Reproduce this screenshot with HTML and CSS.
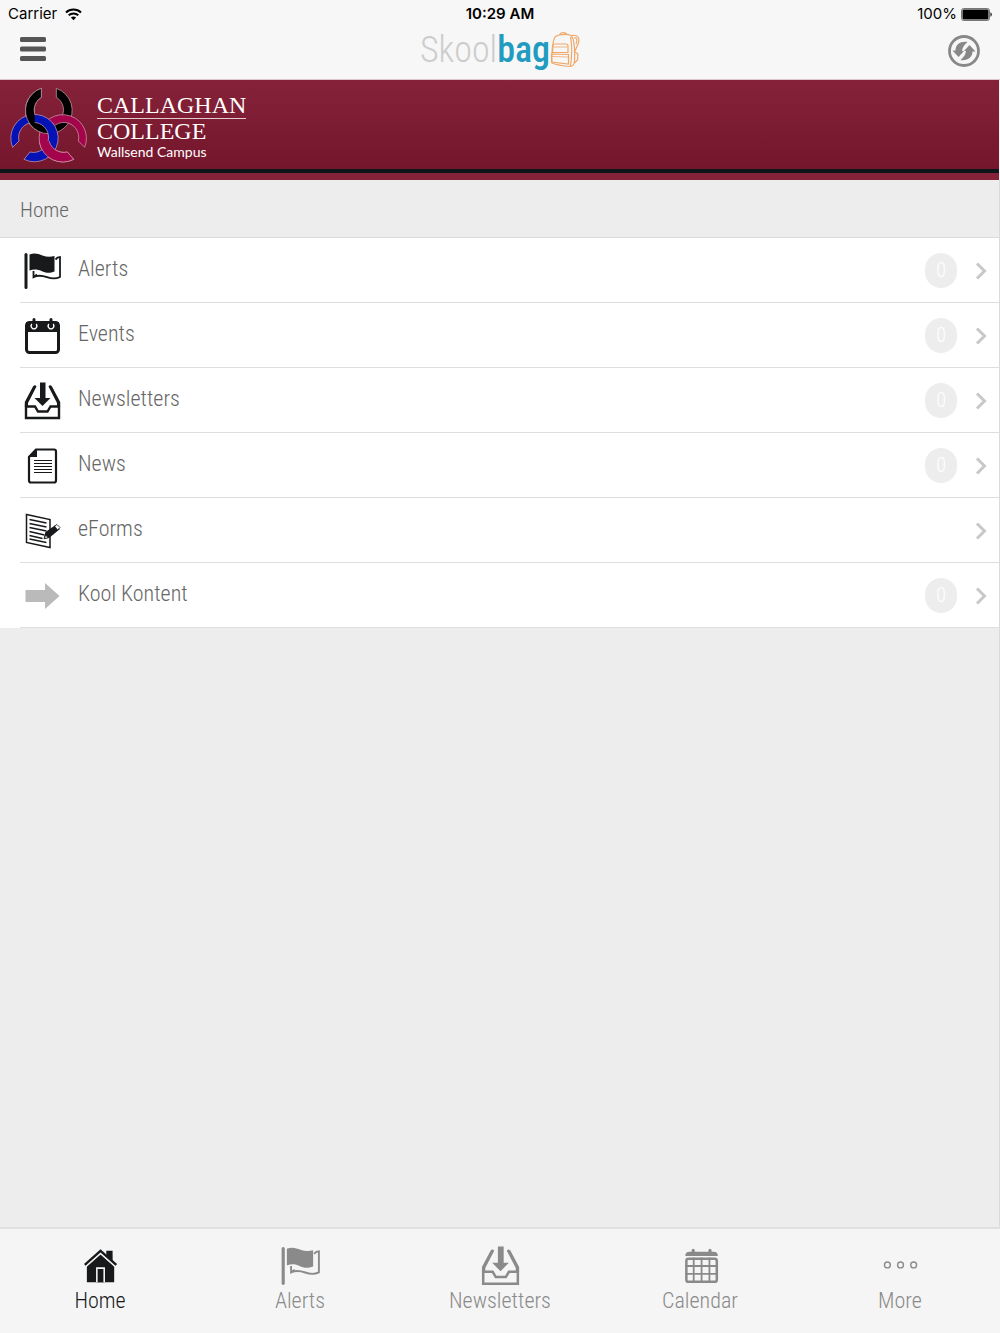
FILE: index.html
```html
<!DOCTYPE html>
<html lang="en">
	<head>
		<meta charset="UTF-8">
		<meta name="viewport" content="width=device-width, initial-scale=1">
		<title>Skoolbag</title>
		<link rel="stylesheet" href="styles.css">
	</head>
	<body>
		<!-- shared icons -->
		<svg class="defs" aria-hidden="true">
			<symbol id="flag" viewBox="0 0 40 40">
				<path d="M4 3.500v33" fill="none" stroke="currentColor" stroke-width="3" stroke-linecap="round"/>
				<path d="M7.500 3.500c5-2 9-.5 13 1s8 1.500 12 .5V20.500c-5 2-9 1.500-13-.5s-8-2-12-.5z" fill="currentColor"/>
				<path d="M33.500 8.500l2-2 2.500-.5v20c-4 2-8 2-13 .2s-9-2.500-13.500 0V20M11.500 26l3.500-2.500" fill="none" stroke="currentColor" stroke-width="1.800"/>
			</symbol>
			<symbol id="inbox" viewBox="0 0 40 40">
				<path d="M18 1.500h5.500V17h5L20.500 25 12.500 17H18z" fill="currentColor"/>
				<path d="M4 37h33V25.500h-8.500l-3 5h-9.500l-3-5H4z" fill="none" stroke="currentColor" stroke-width="2.400"/>
				<path d="M2.800 25.500V21L11 5.500q2-2.500 3.500 0L6 22v3.500zM38.200 25.500V21L30 5.500q-2-2.500-3.500 0L35 22v3.500z" fill="currentColor"/>
			</symbol>
			<symbol id="next" viewBox="0 0 12 18">
				<path d="M2 1.500L9.500 9 2 16.500" fill="none" stroke="currentColor" stroke-width="3"/>
			</symbol>
		</svg>
		<div class="app">
			<header class="top">
				<div class="status">
					<span class="carrier">Carrier
						<svg width="17" height="13" viewBox="0 0 17 13"><path d="M1 4.500C5 .5 12 .5 16 4.500M3.700 7.300c2.700-2.500 6.900-2.500 9.600 0" fill="none" stroke="#000" stroke-width="2"/><path d="M5.900 9.500c1.500-1.300 3.700-1.300 5.200 0L8.500 12.300z"/></svg>
					</span>
					<span class="time">10:29 AM</span>
					<span class="battery">100%
						<svg width="31" height="13" viewBox="0 0 31 13"><rect x=".5" y=".5" width="28" height="12" rx="2" fill="none" stroke="#777"/><rect x="1.500" y="1.500" width="26" height="10" rx="1"/><path d="M29.500 4q2.500 2.500 0 5z"/></svg>
					</span>
				</div>
				<div class="bar">
					<button class="menu" type="button" aria-label="Menu">
						<svg width="26" height="26" viewBox="0 0 26 26" fill="#555"><rect y="1" width="26" height="5" rx="1.500"/><rect y="10.500" width="26" height="5" rx="1.500"/><rect y="20" width="26" height="5" rx="1.500"/></svg>
					</button>
					<a class="brand" href="#">
						<span class="skool">Skool</span><span class="bag">bag</span>
						<svg width="30" height="36" viewBox="0 0 30 36" fill="none" stroke="#f0a868" stroke-width="1.200">
							<path d="M5 5C7 2.500 17 1.500 21 3.500c3 3 4 12 3.500 26-.5 3-2 5-4.500 5C14 34 7 33 2 31c-.5-7 0-20 3-26zM20.500 5c1.500 8 1.500 19 0 29"/>
							<path d="M9.500 2.800c1-2.800 6-2.800 7.500-.3"/>
							<path d="M3 14q0-2 2-2h11q2 0 2 2v6.500H2.500zM1.500 22l17 .5v9.500L1.500 30z"/>
							<path d="M3.500 15h14M2 24.500l16 .5" stroke-width=".8"/>
							<path d="M21.500 3.500c6-1 8.500 2 7 7.500l-3.500 8M24 6c4-.5 3 3 2 6M25 20l3 2-.5 6-3 3"/>
						</svg>
					</a>
					<button class="refresh" type="button" aria-label="Refresh">
						<svg width="32" height="32" viewBox="0 0 32 32">
							<circle cx="16" cy="16" r="14.500" fill="none" stroke="#888" stroke-width="2.800"/>
							<path id="arrow" d="M19.500 7C12.500 6 7.500 9.500 7.500 15.500H4.500L10.500 22l5.500-6h-2c.5-3.500 2-6 5.500-9z" fill="#888"/>
							<use href="#arrow" transform="rotate(180 16 16)"/>
						</svg>
					</button>
				</div>
			</header>

			<div class="banner">
				<svg class="crest" width="80" height="76" viewBox="27 23 240 228" stroke="#d8a9b6" stroke-width="2">
					<defs>
						<path id="black" fill="#000" d="M124 27A70 70 0 1 0 169 27V54A44 44 0 1 1 124 54z"/>
						<path id="blue" fill="#0512b5" d="M38 204A71 71 0 1 1 72 240L90 218A45 45 0 1 0 57 185z"/>
						<path id="red" fill="#a3044c" d="M254 204A71 71 0 1 0 221 240L202 218A45 45 0 1 1 235 185z"/>
						<clipPath id="mid"><path d="M70 20h92v150H70z"/></clipPath>
						<clipPath id="left"><path d="M70 20h34v130H70z"/></clipPath>
						<clipPath id="low"><path d="M110 185h120v70H110z"/></clipPath>
					</defs>
					<use href="#black"/>
					<use href="#red"/>
					<use href="#black" clip-path="url(#mid)"/>
					<use href="#blue"/>
					<use href="#black" clip-path="url(#left)"/>
					<use href="#red" clip-path="url(#low)"/>
				</svg>
				<div class="school">
					<span class="name">CALLAGHAN</span>
					<span class="college">COLLEGE</span>
					<span class="campus">Wallsend Campus</span>
				</div>
			</div>

			<main class="content">
				<h1 class="title">Home</h1>
				<ul class="list">
					<li><a href="#">
						<svg class="icon" viewBox="0 0 40 40"><use href="#flag"/></svg>
						<span class="label">Alerts</span><span class="badge">0</span>
						<svg class="next"><use href="#next"/></svg>
					</a></li>
					<li><a href="#">
						<svg class="icon" viewBox="0 0 40 40">
							<rect x="4.500" y="6.500" width="32" height="30" rx="3" fill="none" stroke="currentColor" stroke-width="3"/>
							<path d="M4 6h33v10H4z" fill="currentColor"/>
							<path d="M10 8a2.800 2.800 0 1 0 4 0M27 8a2.800 2.800 0 1 0 4 0" fill="none" stroke="#fff" stroke-width="1.300"/>
							<path d="M12 3.500v7M29 3.500v7" stroke="currentColor" stroke-width="3" stroke-linecap="round"/>
						</svg>
						<span class="label">Events</span><span class="badge">0</span>
						<svg class="next"><use href="#next"/></svg>
					</a></li>
					<li><a href="#">
						<svg class="icon" viewBox="0 0 40 40"><use href="#inbox"/></svg>
						<span class="label">Newsletters</span><span class="badge">0</span>
						<svg class="next"><use href="#next"/></svg>
					</a></li>
					<li><a href="#">
						<svg class="icon" viewBox="0 0 40 40">
							<path d="M14 3.500h18q2 0 2 2v29q0 2-2 2H9q-2 0-2-2V11z" fill="none" stroke="currentColor" stroke-width="2.200"/>
							<path d="M15 3v8H7z" fill="currentColor"/>
							<path d="M12 14.500h18M12 17.500h18M12 20.500h18M12 23.500h18M12 26.500h18" stroke="currentColor"/>
						</svg>
						<span class="label">News</span><span class="badge">0</span>
						<svg class="next"><use href="#next"/></svg>
					</a></li>
					<li><a href="#">
						<svg class="icon" viewBox="0 0 40 40">
							<path d="M4.500 3.500L28 8.500v28L4.500 31.500z" fill="none" stroke="currentColor" stroke-width="1.500"/>
							<path d="M7.500 8.500l17 3.500M7.500 12.500l17 3.500M7.500 16.500l17 3.500M7.500 20.500l15 3.500M7.500 24.500l13 3M7.500 28l17 3.500" stroke="currentColor" stroke-width="1.300"/>
							<path d="M21.500 28l2-7 10-7 4.500 4-11 9z" fill="currentColor"/>
							<path d="M32.500 15l2.500-1.500 3 3-2.500 2.500z" fill="#fff" stroke="currentColor" stroke-width=".8"/>
							<path d="M22.500 28l1-4 2.500 2.500z" fill="#fff" stroke="currentColor" stroke-width=".8"/>
						</svg>
						<span class="label">eForms</span>
						<svg class="next"><use href="#next"/></svg>
					</a></li>
					<li><a href="#">
						<svg class="icon" viewBox="0 0 40 40"><path d="M3.500 14H23V7l14.500 13L23 33v-7H3.500z" fill="#bababa"/></svg>
						<span class="label">Kool Kontent</span><span class="badge">0</span>
						<svg class="next"><use href="#next"/></svg>
					</a></li>
				</ul>
			</main>

			<nav class="tabs">
				<a class="active" href="#">
					<svg class="icon" viewBox="0 0 40 40" fill="currentColor">
						<path d="M7.500 20L20.500 9 33.500 20v15.500h-26z"/>
						<path d="M5.500 19L20.500 5.500 35.500 19" fill="none" stroke="#f5f5f5" stroke-width="5"/>
						<path d="M26 5.500h6v10l-6-5.500z"/>
						<path d="M5.500 19L20.500 5.500 35.500 19" fill="none" stroke="currentColor" stroke-width="2.200"/>
						<path d="M17 35.500V22h7v13.500" stroke="#f5f5f5" stroke-width="1.500"/>
					</svg>
					Home
				</a>
				<a href="#"><svg class="icon" viewBox="0 0 40 40"><use href="#flag"/></svg>Alerts</a>
				<a href="#"><svg class="icon" viewBox="0 0 40 40"><use href="#inbox"/></svg>Newsletters</a>
				<a href="#">
					<svg class="icon" viewBox="0 0 40 40" fill="none" stroke="currentColor">
						<path d="M6 10.500q0-4 4-4h23q4 0 4 4z" fill="currentColor" stroke="none"/>
						<path d="M13.500 5v4M29.500 5v4" stroke-width="3" stroke-linecap="round"/>
						<rect x="7" y="13" width="29" height="22" rx="2" stroke-width="2.400"/>
						<path d="M14 12v24M21.500 12v24M29 12v24M6 20h31M6 27.500h31" stroke-width="1.700"/>
					</svg>
					Calendar
				</a>
				<a href="#">
					<svg class="icon" viewBox="0 0 40 40" fill="none" stroke="currentColor" stroke-width="1.300"><circle cx="8" cy="19" r="2.800"/><circle cx="20.500" cy="19" r="2.800"/><circle cx="33" cy="19" r="2.800"/></svg>
					More
				</a>
			</nav>
		</div>
	</body>
</html>
```
FILE: styles.css
```css
*{
	box-sizing: border-box;
}
body{
	margin: 0;
	font-family: "Roboto Condensed", "Liberation Sans Narrow", Roboto, sans-serif;
	font-weight: 300;
	font-size: 22px;
	background: #f5f5f5;
}
a{
	color: inherit;
	text-decoration: none;
}
ul{
	list-style: none;
	margin: 0;
	padding: 0;
}
button{
	border: 0;
	padding: 0;
	background: none;
	cursor: pointer;
}
svg{
	display: block;
	flex: none;
}
.defs{
	display: none;
}
.app{
	display: flex;
	flex-direction: column;
	min-height: 100vh;
}
/* status bar and title bar */
.top{
	height: 80px;
	background: #f7f7f7;
	border-bottom: 1px solid #dcc5cb;
}
.status{
	display: grid;
	grid-template-columns: 1fr auto 1fr;
	padding: 4px 8px 0;
	font: 400 15px/20px Inter, sans-serif;
	color: #000;
}
.status span{
	display: flex;
	align-items: center;
	gap: 8px;
}
.status .time{
	font-weight: 600;
}
.status .battery{
	justify-content: flex-end;
	gap: 4px;
}
.bar{
	display: grid;
	grid-template-columns: 1fr auto 1fr;
	align-items: center;
	height: 54px;
	padding: 0 20px;
}
.menu{
	justify-self: start;
	padding-bottom: 4px;
}
.refresh{
	justify-self: end;
}
.brand{
	display: flex;
	align-items: center;
	padding-bottom: 2px;
	font: 400 36px/40px "Liberation Sans Narrow", "Roboto Condensed", sans-serif;
}
.skool{
	color: #ccc;
	font-weight: 300;
}
.bag{
	color: #219bc0;
	font-weight: 500;
}
/* school banner */
.banner{
	display: flex;
	align-items: center;
	gap: 8px;
	height: 100px;
	padding: 0 9px 10px;
	margin-right: 1px;
	background: linear-gradient(#0c1518, #0c1518) 0 89px / 100% 4px no-repeat, linear-gradient(#852239, #74162c 89px, #852239 93px);
	color: #fff;
}
.school{
	display: flex;
	flex-direction: column;
	align-items: flex-start;
	padding-top: 2px;
	font: 400 24px/25px "Liberation Serif", serif;
}
.name{
	border-bottom: 1px solid #e3c8cf;
}
.campus{
	font: 400 14px/16px Lato, sans-serif;
}
/* list */
.content{
	flex: 1;
	background: #ededed;
	border-right: 1px solid #dadada;
	color: #666;
}
.title{
	margin: 0;
	padding: 2px 20px 0;
	font-size: 21px;
	font-weight: 300;
	line-height: 57px;
	height: 58px;
	border-bottom: 1px solid #dadada;
}
.list{
	background: #fff;
	padding-left: 20px;
}
.list a{
	display: flex;
	align-items: center;
	height: 65px;
	padding: 2px 12px 0 2px;
	border-bottom: 1px solid #dedede;
}
.icon{
	width: 40px;
	height: 40px;
	color: #17191b;
}
.label{
	flex: 1;
	padding: 0 16px 6px;
}
.badge{
	width: 32px;
	height: 35px;
	margin: 0 18px 2px 0;
	border-radius: 16px;
	background: #ededed;
	color: #fff;
	font-size: 20px;
	line-height: 35px;
	text-align: center;
}
.next{
	width: 12px;
	height: 18px;
	color: #c8c8c8;
}
/* bottom tabs */
.tabs{
	display: grid;
	grid-template-columns: repeat(5, 1fr);
	height: 106px;
	background: #f5f5f5;
	border-top: 2px solid #e0e0e0;
}
.tabs a{
	display: flex;
	flex-direction: column;
	align-items: center;
	padding-top: 16px;
	line-height: 28px;
	color: #8a8a8a;
}
.tabs .icon{
	width: 42px;
	height: 42px;
	color: inherit;
}
.tabs .active{
	color: #17191b;
}
```
